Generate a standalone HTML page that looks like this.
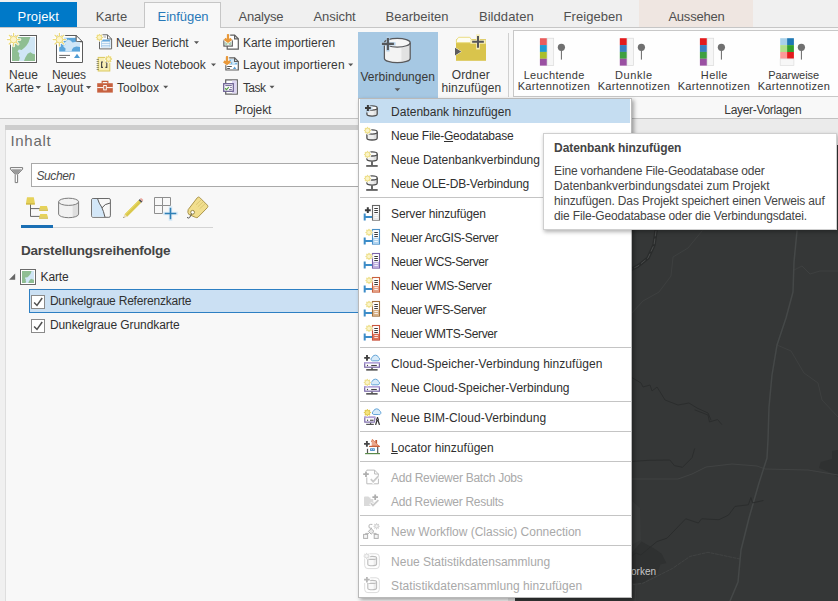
<!DOCTYPE html>
<html lang="de"><head><meta charset="utf-8"><title>ArcGIS Pro</title>
<style>
html,body{margin:0;padding:0}
body{width:838px;height:601px;position:relative;overflow:hidden;background:#f0f0f0;font-family:"Liberation Sans",sans-serif}
.b{position:absolute;box-sizing:border-box}
.t{position:absolute;white-space:pre;line-height:1;font-family:"Liberation Sans",sans-serif}
.t u{text-decoration-thickness:1px;text-underline-offset:1px}
svg{position:absolute;overflow:visible}
</style></head><body>
<!-- tab row -->
<div class="b" style="left:0;top:0;width:838px;height:28px;background:#f0f0f0"></div>
<div class="b" style="left:639px;top:0;width:114px;height:27px;background:#efe6e1"></div>
<div class="b" style="left:0;top:27px;width:838px;height:1px;background:#c6c6c6"></div>
<div class="b" style="left:0;top:2px;width:77px;height:25px;background:#0079c8"></div>
<div class="b" style="left:144px;top:2px;width:77px;height:26px;background:#f8f8f8;border:1px solid #c6c6c6;border-bottom:none"></div>
<!-- ribbon body -->
<div class="b" style="left:0;top:28px;width:838px;height:90px;background:#f8f8f8"></div>
<div class="b" style="left:0;top:118px;width:838px;height:1px;background:#c2c2c2"></div>
<!-- Verbindungen highlight -->
<div class="b" style="left:358px;top:32px;width:80px;height:66px;background:#a6c8e3"></div>
<!-- separator + gallery -->
<div class="b" style="left:508px;top:33px;width:1px;height:64px;background:#d0d0d0"></div>
<div class="b" style="left:513px;top:30px;width:330px;height:67px;background:#fefefe;border:1px solid #c8c8c8"></div>
<!-- area below ribbon -->
<div class="b" style="left:0;top:119px;width:838px;height:482px;background:#f0f0f0"></div>
<div class="b" style="left:631px;top:119px;width:207px;height:26px;background:#ebebeb"></div>
<!-- contents panel -->
<div class="b" style="left:5px;top:125px;width:503px;height:5px;background:#cdcdcd"></div>
<div class="b" style="left:5px;top:130px;width:503px;height:471px;background:#f8f8f8;border-left:1px solid #dedede"></div>
<div class="b" style="left:508px;top:125px;width:7px;height:476px;background:#e4e4e4"></div>
<!-- search -->
<div class="b" style="left:31px;top:163px;width:340px;height:24px;background:#ffffff;border:1px solid #a9a9a9"></div>
<!-- icon tab underline -->
<div class="b" style="left:21px;top:227px;width:192px;height:1px;background:#d4d4d4"></div>
<div class="b" style="left:21px;top:225px;width:32px;height:3px;background:#1a6fb4"></div>
<!-- selected row -->
<div class="b" style="left:29px;top:289px;width:340px;height:24px;background:#cbe0f3;border:1px solid #2d7fc3"></div>
<div class="b" style="left:31px;top:295px;width:14px;height:14px;background:#fff;border:1px solid #8a8a8a"></div>
<div class="b" style="left:31px;top:319px;width:14px;height:14px;background:#fff;border:1px solid #8a8a8a"></div>
<!-- map -->
<div class="b" style="left:515px;top:145px;width:323px;height:456px;background:#353737"></div>
<svg style="left:0;top:0" width="838" height="601" viewBox="0 0 838 601">
<g fill="none" stroke-linejoin="round" stroke-linecap="round">
<path d="M631 553.7L641.5 541.5L655 549L661.7 553.7L666.4 563L660.3 564.4L657 574L641.5 583.3L631 583Z" fill="#2f3131" stroke="none"/>
<path d="M838 450L832 451L832 459L820.8 462L819 468L828.8 472L838 477Z" fill="#2f3131" stroke="none"/>
<path d="M631 500L640 508L641 540L631 545Z" fill="#393b3b" stroke="none"/>
<path d="M702 231L688 248L673 257L671 276L659 292L643 301L631 314" stroke="#3e4040" stroke-width="1"/>
<path d="M794 270L802 266L810 274L820 271L838 271" stroke="#3e4040" stroke-width="1"/>
<path d="M777 345L791 351L804 373L818 383L822 400L838 417" stroke="#3e4040" stroke-width="1"/>
<path d="M631 479L678 479L692 474L706 467L732 464L757 466L765 469L808 470L838 475" stroke="#414343" stroke-width="1"/>
<path d="M633.4 584.6L642.8 583.3L672.4 568.5L690 556.4L708 552.3L740 559" stroke="#414343" stroke-width="1" stroke-dasharray="3 1.5"/>
<path d="M636 585L635 601" stroke="#3d3f3f" stroke-width="1"/>
<path d="M797 231L794 262L793 292L786 318L777 345L772 375L769 407L768 440L767 458L759 483L749 518L741 550L738 582L730 601" stroke="#454848" stroke-width="1.5"/>
<path d="M631 377L641 383L643 387L650 385L652 391L657 387L662 395L665 400L678 405L689 403L697 408L708 413L711 420" stroke="#2b2d2d" stroke-width="1"/>
<path d="M695 410L708 415L709.5 422L717.5 419.5L721.6 424.3" stroke="#2b2d2d" stroke-width="1"/>
<path d="M631 461.5L649 460.3L669.8 460L674.5 465.7L682.5 467.3L692 457.7L694.6 448.8" stroke="#2b2d2d" stroke-width="1"/>
<path d="M763 500.6L752.5 502.9L750.9 497.5L748.3 504.8L735 506.4L728.6 515L719 519.7L701.6 518.8L698.4 523L685.7 518.8L667 538.2L657 541.5L640.8 555L636 553L631 557" stroke="#2b2d2d" stroke-width="1"/>
<path d="M656 231L654 245L648 258L638 266L631 269.5" stroke="#2a2c2c" stroke-width="3.4"/>
<path d="M656 231L654 245L648 258L638 266L631 269.5" stroke="#4a4c4c" stroke-width="1" stroke-dasharray="5 3"/>
</g>
<text x="624.4" y="575" font-family="Liberation Sans, sans-serif" font-size="10" fill="#c8c8c8">Borken</text>
</svg>

<!-- menu -->
<div class="b" style="left:358px;top:98px;width:274px;height:500px;background:#ffffff;border:1px solid #b9b9b9;box-shadow:2px 2px 4px rgba(0,0,0,0.35)"></div>
<div class="b" style="left:360px;top:99px;width:270px;height:24px;background:#c5ddf1"></div>
<div class="b" style="left:360px;top:197px;width:271px;height:1px;background:#c4c4c4"></div>
<div class="b" style="left:360px;top:347px;width:271px;height:1px;background:#c4c4c4"></div>
<div class="b" style="left:360px;top:401px;width:271px;height:1px;background:#c4c4c4"></div>
<div class="b" style="left:360px;top:431px;width:271px;height:1px;background:#c4c4c4"></div>
<div class="b" style="left:360px;top:461px;width:271px;height:1px;background:#c4c4c4"></div>
<div class="b" style="left:360px;top:515px;width:271px;height:1px;background:#c4c4c4"></div>
<div class="b" style="left:360px;top:545px;width:271px;height:1px;background:#c4c4c4"></div>
<!-- tooltip -->
<div class="b" style="left:543px;top:133px;width:294px;height:97px;background:#ffffff;border:1px solid #cfcfcf;box-shadow:1px 2px 4px rgba(0,0,0,0.3)"></div>
<svg style="left:0;top:0" width="838" height="601" viewBox="0 0 838 601">
<rect x="10.5" y="35.5" width="26" height="27" fill="#ffffff" stroke="#5c5c5c" stroke-width="1"/><rect x="12" y="37" width="23" height="24" fill="#8fbe93"/><path d="M30.40 37.00L35.00 37.00L35.00 54.28L32.70 53.80L30.40 52.36L27.64 53.80L25.34 57.40L23.96 61.00L18.90 61.00L19.82 57.64L18.90 55.72L19.36 53.32L17.52 51.40L18.90 49.48L21.66 49.96L24.65 47.56L26.72 45.16L28.56 42.28L29.48 39.40Z" fill="#d0e6f5"/>
<path d="M13.60 36.00L13.60 33.30M16.15 37.05L18.05 35.15M17.20 39.60L19.90 39.60M16.15 42.15L18.05 44.05M13.60 43.20L13.60 45.90M11.05 42.15L9.15 44.05M10.00 39.60L7.30 39.60M11.05 37.05L9.15 35.15" stroke="#ffffff" stroke-width="2.875" stroke-linecap="round" fill="none" opacity="0.9"/><circle cx="13.6" cy="39.6" r="4.6" fill="#ffffff" opacity="0.9"/><path d="M13.60 36.00L13.60 33.30M16.15 37.05L18.05 35.15M17.20 39.60L19.90 39.60M16.15 42.15L18.05 44.05M13.60 43.20L13.60 45.90M11.05 42.15L9.15 44.05M10.00 39.60L7.30 39.60M11.05 37.05L9.15 35.15" stroke="#ecd97a" stroke-width="1.25" stroke-linecap="round" fill="none"/><circle cx="13.6" cy="39.6" r="3.3" fill="#fcf4cc" stroke="#ecd97a" stroke-width="1"/>
<path d="M35.6 86h5.4l-2.7 3z" fill="#555"/>
<path d="M56.5 35.5H76.2L82.5 41.8V62.5H56.5Z" fill="#ffffff" stroke="#5c5c5c" stroke-width="1"/><path d="M76.2 35.5V41.8H82.5" fill="#ffffff" stroke="#5c5c5c" stroke-width="1"/>
<rect x="59.2" y="37.8" width="20.8" height="13.8" fill="#5aa5db"/>
<path d="M76.2 37.8V41.6H80V37.8Z" fill="#ffffff"/>
<path d="M76.2 35.6V41.6H82.4Z" fill="#ffffff"/><path d="M76.2 35.5V41.5H82.5" fill="none" stroke="#5c5c5c" stroke-width="1"/><path d="M76.2 35.5L82.5 41.8" stroke="#5c5c5c" stroke-width="1"/>
<path d="M66 41.4L68 39.6L70.5 40.4L72.5 42.4L76.2 41.8L80 42V47L76.4 46.4L73.4 47.6L72 49.6L71.6 51.6H65.2L65.6 48.6L63.2 46.4L65.4 44.4L64.6 42.6Z" fill="#cfe6f7"/>
<path d="M59.2 55.4H70M59.2 57.6H66" stroke="#666" stroke-width="1"/>
<path d="M74 58L77 53.8L80 58Z" fill="#4e9bd3"/>
<path d="M59.40 36.00L59.40 33.30M61.95 37.05L63.85 35.15M63.00 39.60L65.70 39.60M61.95 42.15L63.85 44.05M59.40 43.20L59.40 45.90M56.85 42.15L54.95 44.05M55.80 39.60L53.10 39.60M56.85 37.05L54.95 35.15" stroke="#ffffff" stroke-width="2.875" stroke-linecap="round" fill="none" opacity="0.9"/><circle cx="59.4" cy="39.6" r="4.6" fill="#ffffff" opacity="0.9"/><path d="M59.40 36.00L59.40 33.30M61.95 37.05L63.85 35.15M63.00 39.60L65.70 39.60M61.95 42.15L63.85 44.05M59.40 43.20L59.40 45.90M56.85 42.15L54.95 44.05M55.80 39.60L53.10 39.60M56.85 37.05L54.95 35.15" stroke="#ecd97a" stroke-width="1.25" stroke-linecap="round" fill="none"/><circle cx="59.4" cy="39.6" r="3.3" fill="#fcf4cc" stroke="#ecd97a" stroke-width="1"/>
<path d="M85.9 86h5.4l-2.7 3z" fill="#555"/>
<path d="M99.5 34.8H107.5L111.6 39V48.9H99.5Z" fill="#ffffff" stroke="#666" stroke-width="1"/><path d="M107.5 34.8V39H111.6" fill="none" stroke="#666" stroke-width="1"/>
<rect x="101.6" y="39.8" width="8.4" height="7.2" fill="#eef6fc"/><rect x="101.6" y="39.8" width="8.4" height="1.7" fill="#5fa3da"/><path d="M101.6 43.5H110M101.6 45.5H110" stroke="#a8cce8" stroke-width="0.8"/><rect x="101.6" y="39.8" width="8.4" height="7.2" fill="none" stroke="#8abce4" stroke-width="0.6"/><path d="M103 37H106" stroke="#888" stroke-width="0.8"/>
<path d="M99.40 34.80L99.40 34.40M101.24 35.56L101.52 35.28M102.00 37.40L102.40 37.40M101.24 39.24L101.52 39.52M99.40 40.00L99.40 40.40M97.56 39.24L97.28 39.52M96.80 37.40L96.40 37.40M97.56 35.56L97.28 35.28" stroke="#ffffff" stroke-width="2.625" stroke-linecap="round" fill="none" opacity="0.9"/><circle cx="99.4" cy="37.4" r="3.1999999999999997" fill="#ffffff" opacity="0.9"/><path d="M99.40 34.80L99.40 34.40M101.24 35.56L101.52 35.28M102.00 37.40L102.40 37.40M101.24 39.24L101.52 39.52M99.40 40.00L99.40 40.40M97.56 39.24L97.28 39.52M96.80 37.40L96.40 37.40M97.56 35.56L97.28 35.28" stroke="#ecdb80" stroke-width="1.5" stroke-linecap="round" fill="none"/><circle cx="99.4" cy="37.4" r="2.3" fill="#fbf3c4" stroke="#ecdb80" stroke-width="1"/>
<path d="M194 41.3h5l-2.5 2.8z" fill="#555"/>
<rect x="98.2" y="57.4" width="11.6" height="13.6" fill="#f8efb4" stroke="#dac85e" stroke-width="1"/>
<path d="M96.6 59.5H98.8M96.6 61.5H98.8M96.6 63.5H98.8M96.6 65.5H98.8M96.6 67.5H98.8M96.6 69.5H98.8" stroke="#6a6a4a" stroke-width="0.7"/>
<path d="M103 62H101.6V67.4H103M105.4 62H106.8V67.4H105.4" fill="none" stroke="#444" stroke-width="1.1"/>
<path d="M108.60 56.50L108.60 56.10M110.44 57.26L110.72 56.98M111.20 59.10L111.60 59.10M110.44 60.94L110.72 61.22M108.60 61.70L108.60 62.10M106.76 60.94L106.48 61.22M106.00 59.10L105.60 59.10M106.76 57.26L106.48 56.98" stroke="#ffffff" stroke-width="2.625" stroke-linecap="round" fill="none" opacity="0.9"/><circle cx="108.6" cy="59.1" r="3.1999999999999997" fill="#ffffff" opacity="0.9"/><path d="M108.60 56.50L108.60 56.10M110.44 57.26L110.72 56.98M111.20 59.10L111.60 59.10M110.44 60.94L110.72 61.22M108.60 61.70L108.60 62.10M106.76 60.94L106.48 61.22M106.00 59.10L105.60 59.10M106.76 57.26L106.48 56.98" stroke="#e8d570" stroke-width="1.5" stroke-linecap="round" fill="none"/><circle cx="108.6" cy="59.1" r="2.3" fill="#fbf3c4" stroke="#e8d570" stroke-width="1"/>
<path d="M211 63.4h5l-2.5 2.8z" fill="#555"/>
<rect x="97.2" y="83.2" width="15.6" height="9.4" fill="#c7613f"/>
<path d="M102.2 83.4V81.4H107.8V83.4" fill="none" stroke="#c7613f" stroke-width="1.2"/>
<path d="M97.2 87.6H103.4M106.6 87.6H112.8" stroke="#ffffff" stroke-width="1"/><rect x="103.7" y="85.5" width="2.6" height="4.4" fill="#c7613f" stroke="#ffffff" stroke-width="0.9"/>
<path d="M163.2 85.7h5l-2.5 2.8z" fill="#555"/>
<path d="M227.2 35.1H234.6L238.3 38.8V49.1H227.2Z" fill="#ffffff" stroke="#5e5e5e" stroke-width="1.2"/><path d="M234.6 35.1V38.8H238.3" fill="none" stroke="#5e5e5e" stroke-width="1.2"/>
<rect x="223.9" y="40.4" width="8.4" height="5.7" fill="#ffffff" stroke="#5e5e5e" stroke-width="1.2"/><rect x="225.2" y="41.8" width="5.8" height="3.2" fill="#a9ceb0"/><path d="M226.8 45L228.1 43.2L229.4 45Z" fill="#eef6f0"/>
<path d="M228.0 34.1V40.6M224.6 38.8L228.0 41.2L231.4 38.8" fill="none" stroke="#ffffff" stroke-width="4.4" stroke-linejoin="round" opacity="0.85"/><path d="M228.0 34.1V40.6" fill="none" stroke="#e8983a" stroke-width="2.2"/><path d="M224.6 38.8L228.0 41.2L231.4 38.8" fill="none" stroke="#e8983a" stroke-width="2.8" stroke-linejoin="miter"/>
<path d="M225.9 57.8H234.6L238.3 61.5V70H225.9Z" fill="#ffffff" stroke="#5e5e5e" stroke-width="1.2"/><path d="M234.6 57.8V61.5H238.3" fill="none" stroke="#5e5e5e" stroke-width="1.2"/>
<path d="M229 59.4H234V62.1H237.2V64.6H229Z" fill="#6fb2e2"/><path d="M231.4 59.4L230.6 61.6L232.4 62.6L232 64.6H234.6L235 63.2L237.2 62.8V62.1H234V59.4Z" fill="#d4e9f8"/>
<path d="M227.2 66.5H231.8M227.2 68.5H229.9" stroke="#555" stroke-width="1"/><path d="M232.9 69L234.6 66.6L236.3 69Z" fill="#5a9fd4"/>
<path d="M227.0 56.1V62.900000000000006M223.8 61.30000000000002L227.0 63.50000000000001L230.2 61.30000000000002" fill="none" stroke="#ffffff" stroke-width="4.4" stroke-linejoin="round" opacity="0.85"/><path d="M227.0 56.1V62.900000000000006" fill="none" stroke="#e8983a" stroke-width="2.2"/><path d="M223.8 61.30000000000002L227.0 63.50000000000001L230.2 61.30000000000002" fill="none" stroke="#e8983a" stroke-width="2.8" stroke-linejoin="miter"/>
<path d="M348.2 63.4h5l-2.5 2.8z" fill="#555"/>
<rect x="225.7" y="79.9" width="11.6" height="14.2" fill="#ffffff" stroke="#5e5e5e" stroke-width="1.2"/><rect x="232" y="80.5" width="4.7" height="13" fill="#ddd6f1"/>
<rect x="223.7" y="83.7" width="9.6" height="7.6" fill="#ffffff" stroke="#6f6496" stroke-width="1.3"/>
<path d="M225.3 85.6H231.8M230.2 87.6H231.8M229 89.6H231.8" stroke="#6f6496" stroke-width="1"/><path d="M225 88.3L226.5 89.7L228.8 87.2" fill="none" stroke="#5aa04a" stroke-width="1.2"/>
<path d="M269.5 85.7h5l-2.5 2.8z" fill="#555"/>
<path d="M384.4 42.699999999999996V58.400000000000006A12.900000000000006 4.3 0 0 0 410.2 58.400000000000006V42.699999999999996A12.900000000000006 4.3 0 0 0 384.4 42.699999999999996Z" fill="#f3f3f3"/><path d="M401.43 46.77V62.47A12.900000000000006 4.3 0 0 0 410.2 58.400000000000006V42.699999999999996A12.900000000000006 4.3 0 0 1 401.43 46.77Z" fill="#e2e2e2"/><path d="M384.4 42.699999999999996V58.400000000000006A12.900000000000006 4.3 0 0 0 410.2 58.400000000000006V42.699999999999996" fill="none" stroke="#58595c" stroke-width="1.25"/><ellipse cx="397.29999999999995" cy="42.699999999999996" rx="12.900000000000006" ry="4.3" fill="#f6f6f6" stroke="#58595c" stroke-width="1.25"/>
<path d="M381.9 43.9H393.9M387.9 37.9V49.9" stroke="#b4d0e8" stroke-width="3.3" fill="none" stroke-linecap="square"/><path d="M381.9 43.9H393.9M387.9 37.9V49.9" stroke="#55575a" stroke-width="2.1" fill="none"/>
<path d="M394.6 88.3h5.6l-2.8 3z" fill="#555"/>
<rect x="456" y="39.2" width="30" height="21.6" fill="#d9c44c"/>
<path d="M456.4 42.7V40L458.6 37.3H469.8L471.3 39.6V42.7Z" fill="#fdfdf3" stroke="#e9da78" stroke-width="0.9" stroke-linejoin="round"/>
<path d="M455 47.7L461.2 51.55L455 55.4Z" fill="#5c5c5e" stroke="#fbfbf4" stroke-width="1" paint-order="stroke"/>
<path d="M472.15 41.85H483.85M478 36.0V47.7" stroke="#f5edb8" stroke-width="3.6" fill="none" stroke-linecap="square"/><path d="M472.15 41.85H483.85M478 36.0V47.7" stroke="#55565a" stroke-width="2" fill="none"/>
<rect x="539.9" y="38.20" width="7.2" height="6.90" fill="#e85c5c"/><rect x="539.9" y="45.05" width="7.2" height="6.90" fill="#1d9ad2"/><rect x="539.9" y="51.90" width="7.2" height="6.90" fill="#a9bf2c"/><rect x="539.9" y="58.75" width="7.2" height="6.90" fill="#9a50a2"/><rect x="547.1" y="38.2" width="6.6" height="27.4" fill="#f6f6f6" stroke="#dadada" stroke-width="0.7"/>
<path d="M561.4 48V59.6" stroke="#666" stroke-width="1"/><circle cx="561.4" cy="47.3" r="3.6" fill="#707070"/>
<rect x="619.8" y="38.20" width="7.2" height="6.90" fill="#e31a1c"/><rect x="619.8" y="45.05" width="7.2" height="6.90" fill="#3a7fc0"/><rect x="619.8" y="51.90" width="7.2" height="6.90" fill="#3fa040"/><rect x="619.8" y="58.75" width="7.2" height="6.90" fill="#9a50a2"/><rect x="627.0" y="38.2" width="6.6" height="27.4" fill="#f6f6f6" stroke="#dadada" stroke-width="0.7"/>
<path d="M641.4 48V59.6" stroke="#666" stroke-width="1"/><circle cx="641.4" cy="47.3" r="3.6" fill="#707070"/>
<rect x="699.9" y="38.20" width="7.2" height="6.90" fill="#e31a1c"/><rect x="699.9" y="45.05" width="7.2" height="6.90" fill="#3a7fc0"/><rect x="699.9" y="51.90" width="7.2" height="6.90" fill="#3fa040"/><rect x="699.9" y="58.75" width="7.2" height="6.90" fill="#9a50a2"/><rect x="707.1" y="38.2" width="6.6" height="27.4" fill="#f6f6f6" stroke="#dadada" stroke-width="0.7"/>
<path d="M721.4 48V59.6" stroke="#666" stroke-width="1"/><circle cx="721.4" cy="47.3" r="3.6" fill="#707070"/>
<rect x="780.2" y="38.20" width="6.9" height="6.95" fill="#a9d1ea"/><rect x="787.1" y="38.20" width="6.8" height="6.95" fill="#1f78b4"/><rect x="780.2" y="45.10" width="6.9" height="6.95" fill="#b2df8a"/><rect x="787.1" y="45.10" width="6.8" height="6.95" fill="#33a02c"/><rect x="780.2" y="52.00" width="6.9" height="6.95" fill="#fb9a99"/><rect x="787.1" y="52.00" width="6.8" height="6.95" fill="#e31a1c"/><rect x="780.2" y="58.9" width="13.7" height="6.7" fill="#f7f7f7" stroke="#dedede" stroke-width="0.7"/>
<path d="M801.4 48V59.6" stroke="#666" stroke-width="1"/><circle cx="801.4" cy="47.3" r="3.6" fill="#707070"/>
<path d="M10.4 167.6H22.6V169.2L17.6 174.4V182.6H15.2V174.4L10.4 169.2Z" fill="#ffffff" stroke="#7a7a7a" stroke-width="1" stroke-linejoin="round"/><path d="M11 169.2H22L17.6 174V174.6H15.2V174Z" fill="#9a9a9a"/>
<path d="M30.5 204V216.4H40M30.5 208.6H40" fill="none" stroke="#666" stroke-width="1"/>
<path d="M27 197.2H33.8L34.9 203H26Z" fill="#e6d25a"/><rect x="26" y="203" width="8.9" height="1.7" fill="#d3bd48"/>
<path d="M40.2 206.1H46.9L48 209.4H39.1Z" fill="#e6d25a"/><rect x="39.1" y="209.4" width="8.9" height="1.5" fill="#d3bd48"/>
<path d="M40.2 213.9H46.9L48 217.3H39.1Z" fill="#e6d25a"/><rect x="39.1" y="217.3" width="8.9" height="1.5" fill="#d3bd48"/>
<path d="M58.6 201.79999999999998V214.1A9.999999999999996 3.6 0 0 0 78.6 214.1V201.79999999999998A9.999999999999996 3.6 0 0 0 58.6 201.79999999999998Z" fill="#f1f1f1"/><path d="M72.60 205.10V217.40A9.999999999999996 3.6 0 0 0 78.6 214.1V201.79999999999998A9.999999999999996 3.6 0 0 1 72.60 205.10Z" fill="#dedede"/><path d="M58.6 201.79999999999998V214.1A9.999999999999996 3.6 0 0 0 78.6 214.1V201.79999999999998" fill="none" stroke="#7c7c7c" stroke-width="1"/><ellipse cx="68.6" cy="201.79999999999998" rx="9.999999999999996" ry="3.6" fill="#f1f1f1" stroke="#7c7c7c" stroke-width="1"/>
<rect x="91.6" y="198.5" width="18.8" height="18.8" rx="1.5" fill="#f7f7f7" stroke="#6a6a6a" stroke-width="1"/>
<path d="M92.2 199.1H97.6Q99 203.5 101.6 207Q103.6 211 104.8 216.8H92.2Z" fill="#d3e7f8"/>
<path d="M97.6 198.8Q99 203.5 101.6 207Q103.6 211 105 217.2M102 207.8Q104.5 203.8 110.2 203" fill="none" stroke="#5a5a5a" stroke-width="1"/>
<path d="M124.6 214.2L138.6 200.2L141.2 202.8L127.2 216.8Z" fill="#dac84c"/><path d="M124.6 214.2L138.6 200.2L139.4 201L125.4 215Z" fill="#e8d96a"/>
<path d="M138.6 200.2L139.9 198.9L142.5 201.5L141.2 202.8Z" fill="#555"/><path d="M139.9 198.9L140.6 198.2Q141.2 197.8 141.8 198.4L143 199.6Q143.5 200.2 143 200.8L142.5 201.5Z" fill="#eaa9a2"/>
<path d="M124.6 214.2L123.3 217.9L127.2 216.8Z" fill="#e8d9b0"/><path d="M123.7 216.8L123.3 217.9L124.5 217.6Z" fill="#555"/>
<path d="M154.5 197.5H170.5V205.5H162.5V213.5H154.5ZM162.5 197.5V205.5M154.5 205.5H162.5" fill="none" stroke="#8e8e8e" stroke-width="1"/>
<path d="M164.7 213.5H176.3M170.5 207.7V219.3" stroke="#dcecf7" stroke-width="3.6" fill="none" stroke-linecap="square"/><path d="M164.7 213.5H176.3M170.5 207.7V219.3" stroke="#2f7fb6" stroke-width="1.6" fill="none"/>
<path d="M188.2 209.6L197.4 197.6Q198.4 196.6 199.6 197.4L207.4 205.2Q208.4 206.4 207.4 207.6L198 217.2Q196.8 218 195.6 217.4L188.8 214.4Q187.2 212.6 188.2 209.6Z" fill="#f1de8e" stroke="#ab954c" stroke-width="1" stroke-linejoin="round"/>
<path d="M196 204.8L201.2 199.8M197.8 206.8L203.2 201.8M199.6 208.8L205 203.8" stroke="#d9c570" stroke-width="0.9"/>
<circle cx="192.6" cy="212.3" r="1.9" fill="#ffffff" stroke="#8a7a3c" stroke-width="0.9"/><path d="M191.6 213.6Q190.6 216 189.6 217.6Q188.4 218.6 187 217.4" fill="none" stroke="#555" stroke-width="1"/>
<path d="M9 279.8H15.2V273.6Z" fill="#666"/>
<rect x="20.5" y="269.5" width="15" height="15" fill="#ffffff" stroke="#6a6a6a" stroke-width="1"/><rect x="22" y="271" width="12" height="12" fill="#8fbe93"/><path d="M31.60 271.00L34.00 271.00L34.00 279.64L32.80 279.40L31.60 278.68L30.16 279.40L28.96 281.20L28.24 283.00L25.60 283.00L26.08 281.32L25.60 280.36L25.84 279.16L24.88 278.20L25.60 277.24L27.04 277.48L28.60 276.28L29.68 275.08L30.64 273.64L31.12 272.20Z" fill="#d0e6f5"/>
<path d="M34.1 302.4L37 305.4L42.2 298" fill="none" stroke="#505050" stroke-width="1.5"/>
<path d="M34.1 326.4L37 329.4L42.2 322" fill="none" stroke="#505050" stroke-width="1.5"/>
<path d="M366.9 108.0V114.0A5.150000000000006 2.1 0 0 0 377.2 114.0V108.0A5.150000000000006 2.1 0 0 0 366.9 108.0Z" fill="#efefef"/><path d="M373.70 109.99V115.99A5.150000000000006 2.1 0 0 0 377.2 114.0V108.0A5.150000000000006 2.1 0 0 1 373.70 109.99Z" fill="#e0e0e0"/><path d="M366.9 108.0V114.0A5.150000000000006 2.1 0 0 0 377.2 114.0V108.0" fill="none" stroke="#4e4e4e" stroke-width="1.3"/><ellipse cx="372.04999999999995" cy="108.0" rx="5.150000000000006" ry="2.1" fill="#fcfcfc" stroke="#4e4e4e" stroke-width="1.3"/>
<path d="M365.0 108H370.79999999999995M367.9 105.1V110.9" stroke="#c5ddf1" stroke-width="3.3" fill="none" stroke-linecap="square"/><path d="M365.0 108H370.79999999999995M367.9 105.1V110.9" stroke="#3a3a3a" stroke-width="2" fill="none"/>
<path d="M366.9 132.0V137.9A5.150000000000006 2.1 0 0 0 377.2 137.9V132.0A5.150000000000006 2.1 0 0 0 366.9 132.0Z" fill="#efefef"/><path d="M373.70 133.99V139.89A5.150000000000006 2.1 0 0 0 377.2 137.9V132.0A5.150000000000006 2.1 0 0 1 373.70 133.99Z" fill="#e0e0e0"/><path d="M366.9 132.0V137.9A5.150000000000006 2.1 0 0 0 377.2 137.9V132.0" fill="none" stroke="#4e4e4e" stroke-width="1.3"/><ellipse cx="372.04999999999995" cy="132.0" rx="5.150000000000006" ry="2.1" fill="#fcfcfc" stroke="#4e4e4e" stroke-width="1.3"/>
<path d="M367.50 127.90L367.50 127.60M369.34 128.66L369.55 128.45M370.10 130.50L370.40 130.50M369.34 132.34L369.55 132.55M367.50 133.10L367.50 133.40M365.66 132.34L365.45 132.55M364.90 130.50L364.60 130.50M365.66 128.66L365.45 128.45" stroke="#ffffff" stroke-width="2.625" stroke-linecap="round" fill="none" opacity="0.9"/><circle cx="367.5" cy="130.5" r="3.1999999999999997" fill="#ffffff" opacity="0.9"/><path d="M367.50 127.90L367.50 127.60M369.34 128.66L369.55 128.45M370.10 130.50L370.40 130.50M369.34 132.34L369.55 132.55M367.50 133.10L367.50 133.40M365.66 132.34L365.45 132.55M364.90 130.50L364.60 130.50M365.66 128.66L365.45 128.45" stroke="#eedf8a" stroke-width="1.5" stroke-linecap="round" fill="none"/><circle cx="367.5" cy="130.5" r="2.3" fill="#fbf4c8" stroke="#eedf8a" stroke-width="1"/>
<path d="M366.9 153.9V159.1A5.150000000000006 2.1 0 0 0 377.2 159.1V153.9A5.150000000000006 2.1 0 0 0 366.9 153.9Z" fill="#efefef"/><path d="M373.70 155.89V161.09A5.150000000000006 2.1 0 0 0 377.2 159.1V153.9A5.150000000000006 2.1 0 0 1 373.70 155.89Z" fill="#e0e0e0"/><path d="M366.9 153.9V159.1A5.150000000000006 2.1 0 0 0 377.2 159.1V153.9" fill="none" stroke="#4e4e4e" stroke-width="1.3"/><ellipse cx="372.04999999999995" cy="153.9" rx="5.150000000000006" ry="2.1" fill="#fcfcfc" stroke="#4e4e4e" stroke-width="1.3"/>
<path d="M372 161.6V165.2" stroke="#4e4e4e" stroke-width="1.7"/><rect x="366.2" y="165.1" width="11.5" height="1.7" fill="#555"/>
<path d="M367.50 151.90L367.50 151.60M369.34 152.66L369.55 152.45M370.10 154.50L370.40 154.50M369.34 156.34L369.55 156.55M367.50 157.10L367.50 157.40M365.66 156.34L365.45 156.55M364.90 154.50L364.60 154.50M365.66 152.66L365.45 152.45" stroke="#ffffff" stroke-width="2.625" stroke-linecap="round" fill="none" opacity="0.9"/><circle cx="367.5" cy="154.5" r="3.1999999999999997" fill="#ffffff" opacity="0.9"/><path d="M367.50 151.90L367.50 151.60M369.34 152.66L369.55 152.45M370.10 154.50L370.40 154.50M369.34 156.34L369.55 156.55M367.50 157.10L367.50 157.40M365.66 156.34L365.45 156.55M364.90 154.50L364.60 154.50M365.66 152.66L365.45 152.45" stroke="#eedf8a" stroke-width="1.5" stroke-linecap="round" fill="none"/><circle cx="367.5" cy="154.5" r="2.3" fill="#fbf4c8" stroke="#eedf8a" stroke-width="1"/>
<path d="M366.9 177.9V183.1A5.150000000000006 2.1 0 0 0 377.2 183.1V177.9A5.150000000000006 2.1 0 0 0 366.9 177.9Z" fill="#efefef"/><path d="M373.70 179.89V185.09A5.150000000000006 2.1 0 0 0 377.2 183.1V177.9A5.150000000000006 2.1 0 0 1 373.70 179.89Z" fill="#e0e0e0"/><path d="M366.9 177.9V183.1A5.150000000000006 2.1 0 0 0 377.2 183.1V177.9" fill="none" stroke="#4e4e4e" stroke-width="1.3"/><ellipse cx="372.04999999999995" cy="177.9" rx="5.150000000000006" ry="2.1" fill="#fcfcfc" stroke="#4e4e4e" stroke-width="1.3"/>
<path d="M372 185.6V189.2" stroke="#4e4e4e" stroke-width="1.7"/><rect x="366.2" y="189.1" width="11.5" height="1.7" fill="#555"/>
<path d="M367.50 175.90L367.50 175.60M369.34 176.66L369.55 176.45M370.10 178.50L370.40 178.50M369.34 180.34L369.55 180.55M367.50 181.10L367.50 181.40M365.66 180.34L365.45 180.55M364.90 178.50L364.60 178.50M365.66 176.66L365.45 176.45" stroke="#ffffff" stroke-width="2.625" stroke-linecap="round" fill="none" opacity="0.9"/><circle cx="367.5" cy="178.5" r="3.1999999999999997" fill="#ffffff" opacity="0.9"/><path d="M367.50 175.90L367.50 175.60M369.34 176.66L369.55 176.45M370.10 178.50L370.40 178.50M369.34 180.34L369.55 180.55M367.50 181.10L367.50 181.40M365.66 180.34L365.45 180.55M364.90 178.50L364.60 178.50M365.66 176.66L365.45 176.45" stroke="#eedf8a" stroke-width="1.5" stroke-linecap="round" fill="none"/><circle cx="367.5" cy="178.5" r="2.3" fill="#fbf4c8" stroke="#eedf8a" stroke-width="1"/>
<rect x="372.5" y="205.5" width="7" height="14.599999999999994" fill="#ffffff" stroke="#666666" stroke-width="1.1"/><rect x="373.1" y="213.8" width="5.8" height="6.2" fill="#e6e6e6"/><path d="M374.3 208.5H377.9M374.3 210.5H377.9M374.3 212.5H377.9" stroke="#3c3c3c" stroke-width="1"/><path d="M374.3 215.6H377.9M374.3 217.6H377.9" stroke="#ffffff" stroke-width="1" opacity="0.9"/><path d="M364.7 213.4V220.6M364.7 217H372" stroke="#3c8cc8" stroke-width="2" fill="none"/>
<path d="M364.90000000000003 210.2H370.7M367.8 207.29999999999998V213.1" stroke="#3a3a3a" stroke-width="2" fill="none"/>
<rect x="372.5" y="229.5" width="7" height="14.599999999999994" fill="#ffffff" stroke="#4a90c8" stroke-width="1.1"/><rect x="373.1" y="237.8" width="5.8" height="6.2" fill="#a9d0ee"/><path d="M374.3 232.5H377.9M374.3 234.5H377.9M374.3 236.5H377.9" stroke="#3c3c3c" stroke-width="1"/><path d="M374.3 239.6H377.9M374.3 241.6H377.9" stroke="#ffffff" stroke-width="1" opacity="0.9"/><path d="M364.7 237.4V244.6M364.7 241H372" stroke="#3c8cc8" stroke-width="2" fill="none"/>
<path d="M369.00 229.80L369.00 229.50M370.84 230.56L371.05 230.35M371.60 232.40L371.90 232.40M370.84 234.24L371.05 234.45M369.00 235.00L369.00 235.30M367.16 234.24L366.95 234.45M366.40 232.40L366.10 232.40M367.16 230.56L366.95 230.35" stroke="#ffffff" stroke-width="2.625" stroke-linecap="round" fill="none" opacity="0.9"/><circle cx="369" cy="232.4" r="3.1999999999999997" fill="#ffffff" opacity="0.9"/><path d="M369.00 229.80L369.00 229.50M370.84 230.56L371.05 230.35M371.60 232.40L371.90 232.40M370.84 234.24L371.05 234.45M369.00 235.00L369.00 235.30M367.16 234.24L366.95 234.45M366.40 232.40L366.10 232.40M367.16 230.56L366.95 230.35" stroke="#eedf8a" stroke-width="1.5" stroke-linecap="round" fill="none"/><circle cx="369" cy="232.4" r="2.3" fill="#fbf4c8" stroke="#eedf8a" stroke-width="1"/>
<rect x="372.5" y="253.5" width="7" height="14.600000000000023" fill="#ffffff" stroke="#7a62a8" stroke-width="1.1"/><rect x="373.1" y="261.8" width="5.8" height="6.2" fill="#b9a8dc"/><path d="M374.3 256.5H377.9M374.3 258.5H377.9M374.3 260.5H377.9" stroke="#3c3c3c" stroke-width="1"/><path d="M374.3 263.6H377.9M374.3 265.6H377.9" stroke="#ffffff" stroke-width="1" opacity="0.9"/><path d="M364.7 261.4V268.6M364.7 265H372" stroke="#3c8cc8" stroke-width="2" fill="none"/>
<path d="M369.00 253.80L369.00 253.50M370.84 254.56L371.05 254.35M371.60 256.40L371.90 256.40M370.84 258.24L371.05 258.45M369.00 259.00L369.00 259.30M367.16 258.24L366.95 258.45M366.40 256.40L366.10 256.40M367.16 254.56L366.95 254.35" stroke="#ffffff" stroke-width="2.625" stroke-linecap="round" fill="none" opacity="0.9"/><circle cx="369" cy="256.4" r="3.1999999999999997" fill="#ffffff" opacity="0.9"/><path d="M369.00 253.80L369.00 253.50M370.84 254.56L371.05 254.35M371.60 256.40L371.90 256.40M370.84 258.24L371.05 258.45M369.00 259.00L369.00 259.30M367.16 258.24L366.95 258.45M366.40 256.40L366.10 256.40M367.16 254.56L366.95 254.35" stroke="#eedf8a" stroke-width="1.5" stroke-linecap="round" fill="none"/><circle cx="369" cy="256.4" r="2.3" fill="#fbf4c8" stroke="#eedf8a" stroke-width="1"/>
<rect x="372.5" y="277.5" width="7" height="14.600000000000023" fill="#ffffff" stroke="#c9603c" stroke-width="1.1"/><rect x="373.1" y="285.8" width="5.8" height="6.2" fill="#e39a7e"/><path d="M374.3 280.5H377.9M374.3 282.5H377.9M374.3 284.5H377.9" stroke="#3c3c3c" stroke-width="1"/><path d="M374.3 287.6H377.9M374.3 289.6H377.9" stroke="#ffffff" stroke-width="1" opacity="0.9"/><path d="M364.7 285.4V292.6M364.7 289H372" stroke="#3c8cc8" stroke-width="2" fill="none"/>
<path d="M369.00 277.80L369.00 277.50M370.84 278.56L371.05 278.35M371.60 280.40L371.90 280.40M370.84 282.24L371.05 282.45M369.00 283.00L369.00 283.30M367.16 282.24L366.95 282.45M366.40 280.40L366.10 280.40M367.16 278.56L366.95 278.35" stroke="#ffffff" stroke-width="2.625" stroke-linecap="round" fill="none" opacity="0.9"/><circle cx="369" cy="280.4" r="3.1999999999999997" fill="#ffffff" opacity="0.9"/><path d="M369.00 277.80L369.00 277.50M370.84 278.56L371.05 278.35M371.60 280.40L371.90 280.40M370.84 282.24L371.05 282.45M369.00 283.00L369.00 283.30M367.16 282.24L366.95 282.45M366.40 280.40L366.10 280.40M367.16 278.56L366.95 278.35" stroke="#eedf8a" stroke-width="1.5" stroke-linecap="round" fill="none"/><circle cx="369" cy="280.4" r="2.3" fill="#fbf4c8" stroke="#eedf8a" stroke-width="1"/>
<rect x="372.5" y="301.5" width="7" height="14.600000000000023" fill="#ffffff" stroke="#a0703c" stroke-width="1.1"/><rect x="373.1" y="309.8" width="5.8" height="6.2" fill="#d3ab80"/><path d="M374.3 304.5H377.9M374.3 306.5H377.9M374.3 308.5H377.9" stroke="#3c3c3c" stroke-width="1"/><path d="M374.3 311.6H377.9M374.3 313.6H377.9" stroke="#ffffff" stroke-width="1" opacity="0.9"/><path d="M364.7 309.4V316.6M364.7 313H372" stroke="#3c8cc8" stroke-width="2" fill="none"/>
<path d="M369.00 301.80L369.00 301.50M370.84 302.56L371.05 302.35M371.60 304.40L371.90 304.40M370.84 306.24L371.05 306.45M369.00 307.00L369.00 307.30M367.16 306.24L366.95 306.45M366.40 304.40L366.10 304.40M367.16 302.56L366.95 302.35" stroke="#ffffff" stroke-width="2.625" stroke-linecap="round" fill="none" opacity="0.9"/><circle cx="369" cy="304.4" r="3.1999999999999997" fill="#ffffff" opacity="0.9"/><path d="M369.00 301.80L369.00 301.50M370.84 302.56L371.05 302.35M371.60 304.40L371.90 304.40M370.84 306.24L371.05 306.45M369.00 307.00L369.00 307.30M367.16 306.24L366.95 306.45M366.40 304.40L366.10 304.40M367.16 302.56L366.95 302.35" stroke="#eedf8a" stroke-width="1.5" stroke-linecap="round" fill="none"/><circle cx="369" cy="304.4" r="2.3" fill="#fbf4c8" stroke="#eedf8a" stroke-width="1"/>
<rect x="372.5" y="325.5" width="7" height="14.600000000000023" fill="#ffffff" stroke="#c9523c" stroke-width="1.1"/><rect x="373.1" y="333.8" width="5.8" height="6.2" fill="#d8674e"/><path d="M374.3 328.5H377.9M374.3 330.5H377.9M374.3 332.5H377.9" stroke="#3c3c3c" stroke-width="1"/><path d="M374.3 335.6H377.9M374.3 337.6H377.9" stroke="#ffffff" stroke-width="1" opacity="0.9"/><path d="M364.7 333.4V340.6M364.7 337H372" stroke="#3c8cc8" stroke-width="2" fill="none"/>
<path d="M369.00 325.80L369.00 325.50M370.84 326.56L371.05 326.35M371.60 328.40L371.90 328.40M370.84 330.24L371.05 330.45M369.00 331.00L369.00 331.30M367.16 330.24L366.95 330.45M366.40 328.40L366.10 328.40M367.16 326.56L366.95 326.35" stroke="#ffffff" stroke-width="2.625" stroke-linecap="round" fill="none" opacity="0.9"/><circle cx="369" cy="328.4" r="3.1999999999999997" fill="#ffffff" opacity="0.9"/><path d="M369.00 325.80L369.00 325.50M370.84 326.56L371.05 326.35M371.60 328.40L371.90 328.40M370.84 330.24L371.05 330.45M369.00 331.00L369.00 331.30M367.16 330.24L366.95 330.45M366.40 328.40L366.10 328.40M367.16 326.56L366.95 326.35" stroke="#eedf8a" stroke-width="1.5" stroke-linecap="round" fill="none"/><circle cx="369" cy="328.4" r="2.3" fill="#fbf4c8" stroke="#eedf8a" stroke-width="1"/>
<path d="M372.4 360.79999999999995A1.7 1.7 0 0 1 372.2 357.49999999999994A3.3 3.3 0 0 1 378.5 357.4A1.8 1.8 0 0 1 378.09999999999997 360.79999999999995Z" fill="#d8ebf9" stroke="#66a6d8" stroke-width="1" stroke-linejoin="round"/>
<rect x="364.70000000000005" y="362.6" width="14.699999999999978" height="4.600000000000011" fill="#ffffff" stroke="#7a68a8" stroke-width="1.2"/><rect x="364.1" y="362" width="15.899999999999977" height="1.5" fill="#b4a4da"/><circle cx="367.5" cy="365.5" r="0.65" fill="#444"/><path d="M371.20000000000005 365.5H376.8" stroke="#444" stroke-width="1.1"/>
<path d="M372 367.8V369.4" stroke="#444" stroke-width="1.4"/><rect x="366.2" y="369.1" width="11.4" height="1.5" fill="#484848"/>
<path d="M364.2 357.9H369.8M367 355.09999999999997V360.7" stroke="#404040" stroke-width="1.9" fill="none"/>
<path d="M372.4 384.79999999999995A1.7 1.7 0 0 1 372.2 381.49999999999994A3.3 3.3 0 0 1 378.5 381.4A1.8 1.8 0 0 1 378.09999999999997 384.79999999999995Z" fill="#d8ebf9" stroke="#66a6d8" stroke-width="1" stroke-linejoin="round"/>
<rect x="364.70000000000005" y="386.6" width="14.699999999999978" height="4.600000000000011" fill="#ffffff" stroke="#7a68a8" stroke-width="1.2"/><rect x="364.1" y="386" width="15.899999999999977" height="1.5" fill="#b4a4da"/><circle cx="367.5" cy="389.5" r="0.65" fill="#444"/><path d="M371.20000000000005 389.5H376.8" stroke="#444" stroke-width="1.1"/>
<path d="M372 391.8V393.4" stroke="#444" stroke-width="1.4"/><rect x="366.2" y="393.1" width="11.4" height="1.5" fill="#484848"/>
<path d="M367.30 379.80L367.30 379.50M369.14 380.56L369.35 380.35M369.90 382.40L370.20 382.40M369.14 384.24L369.35 384.45M367.30 385.00L367.30 385.30M365.46 384.24L365.25 384.45M364.70 382.40L364.40 382.40M365.46 380.56L365.25 380.35" stroke="#ffffff" stroke-width="2.625" stroke-linecap="round" fill="none" opacity="0.9"/><circle cx="367.3" cy="382.4" r="3.1999999999999997" fill="#ffffff" opacity="0.9"/><path d="M367.30 379.80L367.30 379.50M369.14 380.56L369.35 380.35M369.90 382.40L370.20 382.40M369.14 384.24L369.35 384.45M367.30 385.00L367.30 385.30M365.46 384.24L365.25 384.45M364.70 382.40L364.40 382.40M365.46 380.56L365.25 380.35" stroke="#eedf8a" stroke-width="1.5" stroke-linecap="round" fill="none"/><circle cx="367.3" cy="382.4" r="2.3" fill="#fbf4c8" stroke="#eedf8a" stroke-width="1"/>
<path d="M373.7 414.5A1.7 1.7 0 0 1 373.5 411.2A3.3 3.3 0 0 1 379.8 411.1A1.8 1.8 0 0 1 378.3 414.5Z" fill="#d8ebf9" stroke="#66a6d8" stroke-width="1" stroke-linejoin="round"/>
<rect x="364.8" y="417.20000000000005" width="9.99999999999999" height="4.899999999999966" fill="#ffffff" stroke="#7a68a8" stroke-width="1.2"/><rect x="364.2" y="416.6" width="11.199999999999989" height="1.5" fill="#b4a4da"/><circle cx="367.59999999999997" cy="420.25" r="0.65" fill="#444"/><path d="M370 420.25H373.6" stroke="#444" stroke-width="1.1"/>
<path d="M370.6 422.7V424.2" stroke="#555" stroke-width="1.2"/><rect x="366.2" y="423.8" width="7.6" height="1.2" fill="#555"/>
<path d="M377.5 417V418.4M377.3 419.6L375.6 424.9M377.7 419.6L379.5 424.9" stroke="#ffffff" stroke-width="3" fill="none"/>
<path d="M377.5 417V418.4M377.2 419.8L375.6 424.9M377.8 419.8L379.5 424.9" stroke="#383838" stroke-width="1.3" fill="none"/><circle cx="377.5" cy="419.4" r="1.35" fill="#383838"/><circle cx="377.5" cy="419.4" r="0.45" fill="#ffffff"/>
<path d="M367.40 410.00L367.40 409.65M369.24 410.76L369.49 410.51M370.00 412.60L370.35 412.60M369.24 414.44L369.49 414.69M367.40 415.20L367.40 415.55M365.56 414.44L365.31 414.69M364.80 412.60L364.45 412.60M365.56 410.76L365.31 410.51" stroke="#ffffff" stroke-width="2.625" stroke-linecap="round" fill="none" opacity="0.9"/><circle cx="367.4" cy="412.6" r="3.1999999999999997" fill="#ffffff" opacity="0.9"/><path d="M367.40 410.00L367.40 409.65M369.24 410.76L369.49 410.51M370.00 412.60L370.35 412.60M369.24 414.44L369.49 414.69M367.40 415.20L367.40 415.55M365.56 414.44L365.31 414.69M364.80 412.60L364.45 412.60M365.56 410.76L365.31 410.51" stroke="#e2cb52" stroke-width="1.5" stroke-linecap="round" fill="none"/><circle cx="367.4" cy="412.6" r="2.3" fill="#f6e47e" stroke="#e2cb52" stroke-width="1"/>
<rect x="368" y="446.4" width="9.6" height="7" fill="#ffffff"/><path d="M367.5 448.3V453.4M377.7 446.6V453.4" stroke="#555" stroke-width="1.2"/>
<rect x="375.3" y="440" width="1.8" height="4.6" fill="#c25c36"/>
<path d="M372.4 439.3L379.2 446.2H369.6Z" fill="#eca88c" stroke="#d97a56" stroke-width="0.8" stroke-linejoin="round"/><path d="M369 446.4H379.9" stroke="#c8623c" stroke-width="1.2"/>
<rect x="370.1" y="448.3" width="4.7" height="2.6" fill="#4a8cc8"/><circle cx="371.6" cy="449.6" r="0.5" fill="#d8ecfa"/><circle cx="373.4" cy="449.6" r="0.5" fill="#d8ecfa"/>
<path d="M365.1 453.6H380" stroke="#5a8a4a" stroke-width="1.2"/>
<path d="M364.04999999999995 443.9H369.75M366.9 441.04999999999995V446.75" stroke="#ffffff" stroke-width="3.9" fill="none" stroke-linecap="square"/><path d="M364.04999999999995 443.9H369.75M366.9 441.04999999999995V446.75" stroke="#484848" stroke-width="1.9" fill="none"/>
<path d="M366.8 470.1H374.6L378.4 474V483.8H366.8Z" fill="#ffffff" stroke="#bcbcbc" stroke-width="1"/><path d="M374.6 470.1V474H378.4" fill="none" stroke="#bcbcbc" stroke-width="1"/>
<rect x="362.8" y="471" width="6.4" height="6.4" fill="#ffffff"/><path d="M363.2 474.2H368.8M366 471.4V477.0" stroke="#aeaeae" stroke-width="1.8" fill="none"/>
<path d="M370.4 479L373.2 481.8L378.6 476" fill="none" stroke="#ffffff" stroke-width="3.4"/><path d="M370.8 479.2L373.2 481.6L378.4 476.2" fill="none" stroke="#cacaca" stroke-width="1.8"/>
<path d="M364 497.4Q364 496.4 365 496.4H368.4L369.4 497.6H373Q374 497.6 374 498.6V506H364Z" fill="#dadada"/>
<path d="M372.4 497.2H378.0M375.2 494.4V500.0" stroke="#ffffff" stroke-width="3.8" fill="none" stroke-linecap="square"/><path d="M372.4 497.2H378.0M375.2 494.4V500.0" stroke="#aeaeae" stroke-width="1.8" fill="none"/>
<path d="M370.4 503L373 505.6L378.6 500" fill="none" stroke="#ffffff" stroke-width="3.4"/><path d="M370.8 503.2L373 505.4L378.4 500.2" fill="none" stroke="#cacaca" stroke-width="1.8"/>
<path d="M371.2 528V529.6M369 533.4H365.6V534.4M373.4 533.4H376.2V534.4" fill="none" stroke="#b4b4b4" stroke-width="1"/>
<path d="M371.2 528.6L374 531.4L371.2 534.2L368.4 531.4Z" fill="#e8e8e8" stroke="#b0b0b0" stroke-width="1"/>
<rect x="363.6" y="534.4" width="4" height="4" fill="#f4f4f4" stroke="#b0b0b0" stroke-width="1"/><rect x="374.2" y="534.4" width="4" height="4" fill="#f4f4f4" stroke="#b0b0b0" stroke-width="1"/>
<path d="M372.4 524.4H370.4Q369 524.4 369 525.8V527Q369 528.2 370.4 528.2H372" fill="none" stroke="#b4b4b4" stroke-width="1"/>
<path d="M376.60 524.10L376.60 523.50M378.08 524.72L378.51 524.29M378.70 526.20L379.30 526.20M378.08 527.68L378.51 528.11M376.60 528.30L376.60 528.90M375.12 527.68L374.69 528.11M374.50 526.20L373.90 526.20M375.12 524.72L374.69 524.29" stroke="#d0d0d0" stroke-width="1.1" stroke-linecap="round" fill="none"/><circle cx="376.6" cy="526.2" r="1.8" fill="#f4f4f4" stroke="#d0d0d0" stroke-width="1"/>
<rect x="364.7" y="553.8" width="14.6" height="14.8" rx="3.2" fill="#ffffff" stroke="#dcdcdc" stroke-width="1"/>
<path d="M367.8 557.9V564.3A4.400000000000006 1.5 0 0 0 376.6 564.3V557.9A4.400000000000006 1.5 0 0 0 367.8 557.9Z" fill="#fafafa"/><path d="M373.61 559.32V565.72A4.400000000000006 1.5 0 0 0 376.6 564.3V557.9A4.400000000000006 1.5 0 0 1 373.61 559.32Z" fill="#ececec"/><path d="M367.8 557.9V564.3A4.400000000000006 1.5 0 0 0 376.6 564.3V557.9" fill="none" stroke="#bcbcbc" stroke-width="1.1"/><ellipse cx="372.20000000000005" cy="557.9" rx="4.400000000000006" ry="1.5" fill="#fafafa" stroke="#bcbcbc" stroke-width="1.1"/>
<path d="M366.60 553.80L366.60 553.30M368.16 554.44L368.51 554.09M368.80 556.00L369.30 556.00M368.16 557.56L368.51 557.91M366.60 558.20L366.60 558.70M365.04 557.56L364.69 557.91M364.40 556.00L363.90 556.00M365.04 554.44L364.69 554.09" stroke="#ffffff" stroke-width="2.325" stroke-linecap="round" fill="none" opacity="0.9"/><circle cx="366.6" cy="556" r="2.8" fill="#ffffff" opacity="0.9"/><path d="M366.60 553.80L366.60 553.30M368.16 554.44L368.51 554.09M368.80 556.00L369.30 556.00M368.16 557.56L368.51 557.91M366.60 558.20L366.60 558.70M365.04 557.56L364.69 557.91M364.40 556.00L363.90 556.00M365.04 554.44L364.69 554.09" stroke="#dcdcdc" stroke-width="1.2" stroke-linecap="round" fill="none"/><circle cx="366.6" cy="556" r="1.9" fill="#f6f6f6" stroke="#dcdcdc" stroke-width="1"/>
<rect x="364.7" y="577.8" width="14.6" height="14.8" rx="3.2" fill="#ffffff" stroke="#dcdcdc" stroke-width="1"/>
<path d="M367.8 581.9V588.3A4.400000000000006 1.5 0 0 0 376.6 588.3V581.9A4.400000000000006 1.5 0 0 0 367.8 581.9Z" fill="#fafafa"/><path d="M373.61 583.32V589.72A4.400000000000006 1.5 0 0 0 376.6 588.3V581.9A4.400000000000006 1.5 0 0 1 373.61 583.32Z" fill="#ececec"/><path d="M367.8 581.9V588.3A4.400000000000006 1.5 0 0 0 376.6 588.3V581.9" fill="none" stroke="#bcbcbc" stroke-width="1.1"/><ellipse cx="372.20000000000005" cy="581.9" rx="4.400000000000006" ry="1.5" fill="#fafafa" stroke="#bcbcbc" stroke-width="1.1"/>
<rect x="363.6" y="576.4" width="6.6" height="6.6" fill="#ffffff"/><path d="M364.09999999999997 579.7H369.7M366.9 576.9000000000001V582.5" stroke="#b8b8b8" stroke-width="1.8" fill="none"/>
</svg>
<span class="t" style="left:17.62px;top:10.00px;font-size:13px;color:#ffffff;letter-spacing:0.132px;">Projekt</span>
<span class="t" style="left:95.72px;top:10.00px;font-size:13px;color:#505050;letter-spacing:0.095px;">Karte</span>
<span class="t" style="left:157.62px;top:10.00px;font-size:13px;color:#2879b9;letter-spacing:-0.053px;">Einfügen</span>
<span class="t" style="left:238.52px;top:10.00px;font-size:13px;color:#505050;letter-spacing:-0.215px;">Analyse</span>
<span class="t" style="left:313.52px;top:10.00px;font-size:13px;color:#505050;letter-spacing:-0.080px;">Ansicht</span>
<span class="t" style="left:385.52px;top:10.00px;font-size:13px;color:#505050;letter-spacing:0.008px;">Bearbeiten</span>
<span class="t" style="left:478.92px;top:10.00px;font-size:13px;color:#505050;letter-spacing:0.068px;">Bilddaten</span>
<span class="t" style="left:563.62px;top:10.00px;font-size:13px;color:#505050;letter-spacing:0.052px;">Freigeben</span>
<span class="t" style="left:668.42px;top:10.00px;font-size:13px;color:#505050;letter-spacing:-0.224px;">Aussehen</span>
<span class="t" style="left:9.08px;top:69.00px;font-size:12px;color:#383838;letter-spacing:0.051px;">Neue</span>
<span class="t" style="left:5.78px;top:82.00px;font-size:12px;color:#383838;letter-spacing:-0.137px;">Karte</span>
<span class="t" style="left:51.88px;top:69.00px;font-size:12px;color:#383838;letter-spacing:-0.162px;">Neues</span>
<span class="t" style="left:46.88px;top:82.00px;font-size:12px;color:#383838;letter-spacing:0.102px;">Layout</span>
<span class="t" style="left:115.98px;top:37.00px;font-size:12px;color:#383838;letter-spacing:-0.053px;">Neuer Bericht</span>
<span class="t" style="left:115.98px;top:59.00px;font-size:12px;color:#383838;letter-spacing:0.035px;">Neues Notebook</span>
<span class="t" style="left:116.88px;top:82.00px;font-size:12px;color:#383838;letter-spacing:0.128px;">Toolbox</span>
<span class="t" style="left:242.88px;top:37.00px;font-size:12px;color:#383838;letter-spacing:0.012px;">Karte importieren</span>
<span class="t" style="left:242.88px;top:59.00px;font-size:12px;color:#383838;letter-spacing:0.138px;">Layout importieren</span>
<span class="t" style="left:242.88px;top:82.00px;font-size:12px;color:#383838;letter-spacing:-0.549px;">Task</span>
<span class="t" style="left:234.68px;top:104.00px;font-size:12px;color:#383838;letter-spacing:-0.103px;">Projekt</span>
<span class="t" style="left:360.48px;top:71.00px;font-size:12px;color:#383838;letter-spacing:0.033px;">Verbindungen</span>
<span class="t" style="left:451.78px;top:69.00px;font-size:12px;color:#383838;letter-spacing:0.116px;">Ordner</span>
<span class="t" style="left:441.58px;top:82.00px;font-size:12px;color:#383838;letter-spacing:0.102px;">hinzufügen</span>
<span class="t" style="left:523.64px;top:70.00px;font-size:11px;color:#383838;letter-spacing:0.358px;">Leuchtende</span>
<span class="t" style="left:614.94px;top:70.00px;font-size:11px;color:#383838;letter-spacing:0.594px;">Dunkle</span>
<span class="t" style="left:700.84px;top:70.00px;font-size:11px;color:#383838;letter-spacing:0.385px;">Helle</span>
<span class="t" style="left:768.14px;top:70.00px;font-size:11px;color:#383838;letter-spacing:-0.042px;">Paarweise</span>
<span class="t" style="left:517.64px;top:81.00px;font-size:11px;color:#383838;letter-spacing:0.369px;">Kartennotizen</span>
<span class="t" style="left:597.64px;top:81.00px;font-size:11px;color:#383838;letter-spacing:0.369px;">Kartennotizen</span>
<span class="t" style="left:677.64px;top:81.00px;font-size:11px;color:#383838;letter-spacing:0.369px;">Kartennotizen</span>
<span class="t" style="left:757.64px;top:81.00px;font-size:11px;color:#383838;letter-spacing:0.369px;">Kartennotizen</span>
<span class="t" style="left:724.28px;top:104.00px;font-size:12px;color:#383838;letter-spacing:-0.312px;">Layer-Vorlagen</span>
<span class="t" style="left:10.40px;top:133.00px;font-size:15px;color:#6a6a6a;letter-spacing:0.719px;">Inhalt</span>
<span class="t" style="left:36.48px;top:170.00px;font-size:12px;color:#4a4a4a;letter-spacing:-0.393px;font-style:italic;">Suchen</span>
<span class="t" style="left:20.99px;top:244.00px;font-size:13.5px;color:#444444;letter-spacing:-0.224px;font-weight:700;">Darstellungsreihenfolge</span>
<span class="t" style="left:40.58px;top:271.00px;font-size:12px;color:#303030;letter-spacing:-0.162px;">Karte</span>
<span class="t" style="left:49.88px;top:295.00px;font-size:12px;color:#303030;letter-spacing:-0.213px;">Dunkelgraue Referenzkarte</span>
<span class="t" style="left:49.88px;top:319.00px;font-size:12px;color:#303030;letter-spacing:-0.080px;">Dunkelgraue Grundkarte</span>
<span class="t" style="left:391.08px;top:106.00px;font-size:12px;color:#2f2f2f;letter-spacing:-0.003px;">Datenbank hinzufügen</span>
<span class="t" style="left:391.08px;top:130.00px;font-size:12px;color:#2f2f2f;letter-spacing:-0.245px;">Neue File-<u>G</u>eodatabase</span>
<span class="t" style="left:391.08px;top:154.00px;font-size:12px;color:#2f2f2f;letter-spacing:-0.027px;">Neue Datenbankverbindung</span>
<span class="t" style="left:391.08px;top:178.00px;font-size:12px;color:#2f2f2f;letter-spacing:-0.161px;">Neue OLE-DB-Verbindung</span>
<span class="t" style="left:391.08px;top:208.00px;font-size:12px;color:#2f2f2f;letter-spacing:-0.154px;">Server hinzufügen</span>
<span class="t" style="left:391.08px;top:232.00px;font-size:12px;color:#2f2f2f;letter-spacing:-0.335px;">Neuer ArcGIS-Server</span>
<span class="t" style="left:391.08px;top:256.00px;font-size:12px;color:#2f2f2f;letter-spacing:-0.388px;">Neuer WCS-Server</span>
<span class="t" style="left:391.08px;top:280.00px;font-size:12px;color:#2f2f2f;letter-spacing:-0.270px;">Neuer WMS-Server</span>
<span class="t" style="left:391.08px;top:304.00px;font-size:12px;color:#2f2f2f;letter-spacing:-0.439px;">Neuer WFS-Server</span>
<span class="t" style="left:391.08px;top:328.00px;font-size:12px;color:#2f2f2f;letter-spacing:-0.342px;">Neuer WMTS-Server</span>
<span class="t" style="left:391.08px;top:358.00px;font-size:12px;color:#2f2f2f;letter-spacing:0.050px;">Cloud-Speicher-Verbindung hinzufügen</span>
<span class="t" style="left:391.08px;top:382.00px;font-size:12px;color:#2f2f2f;letter-spacing:-0.035px;">Neue Cloud-Speicher-Verbindung</span>
<span class="t" style="left:391.08px;top:412.00px;font-size:12px;color:#2f2f2f;letter-spacing:0.067px;">Neue BIM-Cloud-Verbindung</span>
<span class="t" style="left:391.08px;top:442.00px;font-size:12px;color:#2f2f2f;letter-spacing:0.032px;"><u>L</u>ocator hinzufügen</span>
<span class="t" style="left:391.08px;top:472.00px;font-size:12px;color:#a9a9a9;letter-spacing:-0.262px;">Add Reviewer Batch Jobs</span>
<span class="t" style="left:391.08px;top:496.00px;font-size:12px;color:#a9a9a9;letter-spacing:-0.285px;">Add Reviewer Results</span>
<span class="t" style="left:391.08px;top:526.00px;font-size:12px;color:#a9a9a9;letter-spacing:-0.011px;">New Workflow (Classic) Connection</span>
<span class="t" style="left:391.08px;top:556.00px;font-size:12px;color:#a9a9a9;letter-spacing:-0.011px;">Neue Statistikdatensammlung</span>
<span class="t" style="left:391.08px;top:580.00px;font-size:12px;color:#a9a9a9;letter-spacing:0.053px;">Statistikdatensammlung hinzufügen</span>
<span class="t" style="left:554.08px;top:142.00px;font-size:12px;color:#444444;letter-spacing:-0.070px;font-weight:700;">Datenbank hinzufügen</span>
<span class="t" style="left:554.08px;top:165.00px;font-size:12px;color:#444444;letter-spacing:-0.169px;">Eine vorhandene File-Geodatabase oder</span>
<span class="t" style="left:554.08px;top:180.00px;font-size:12px;color:#444444;letter-spacing:-0.017px;">Datenbankverbindungsdatei zum Projekt</span>
<span class="t" style="left:554.08px;top:195.00px;font-size:12px;color:#444444;letter-spacing:-0.137px;">hinzufügen. Das Projekt speichert einen Verweis auf</span>
<span class="t" style="left:554.08px;top:210.00px;font-size:12px;color:#444444;letter-spacing:-0.170px;">die File-Geodatabase oder die Verbindungsdatei.</span>
</body></html>
